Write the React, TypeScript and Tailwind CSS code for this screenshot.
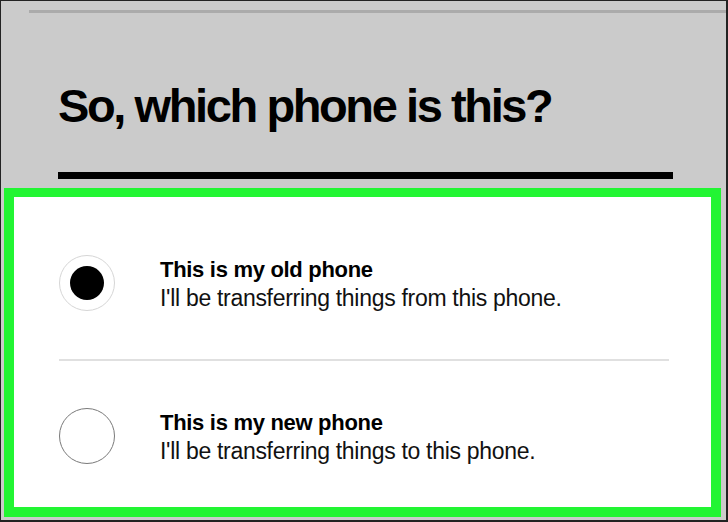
const font = { fontFamily: '"Liberation Sans", Arial, sans-serif' };

interface OptionProps {
  title: string;
  subtitle: string;
  selected?: boolean;
}

function Option({ title, subtitle, selected }: OptionProps) {
  return (
    <div className="flex items-start">
      {selected ? (
        <div className="w-[56px] h-[56px] shrink-0 rounded-full border border-[#d6d6d6] flex items-center justify-center">
          <div className="w-[34px] h-[34px] rounded-full bg-black" />
        </div>
      ) : (
        <div className="w-[56px] h-[56px] shrink-0 rounded-full border border-[#7a7a7a]" />
      )}
      <div className="ml-[45px] mt-[1px] text-black">
        <div className="text-[22px] leading-[28px] font-bold tracking-[-0.3px]">{title}</div>
        <div className="text-[23px] leading-[29px] tracking-[-0.3px] text-[#111]">{subtitle}</div>
      </div>
    </div>
  );
}

export default function App() {
  return (
    <div
      className="w-[728px] h-[522px] bg-[#cbcbcb] border-l border-t border-r-2 border-b-2 border-[#222] overflow-hidden"
      style={font}
    >
      <div className="mt-[9px] ml-[28px] h-[3px] bg-[#ababab]" />
      <h1 className="mt-[69px] ml-[57px] text-[47px] leading-[47px] font-bold tracking-[-2.4px] text-black">
        So, which phone is this?
      </h1>
      <div className="mt-[43px] ml-[57px] w-[615px] h-[7px] bg-black" />
      <div className="mt-[9px] ml-[3px] w-[717px] h-[329px] border-[10px] border-t-[9px] border-[#22f533]">
        <div className="h-full bg-white pl-[45px] pr-[42px] pt-[58px]">
          <Option
            selected
            title="This is my old phone"
            subtitle="I'll be transferring things from this phone."
          />
          <div className="mt-[46px] h-[2px] bg-[#e0e0e0]" />
          <div className="mt-[47px]">
            <Option
              title="This is my new phone"
              subtitle="I'll be transferring things to this phone."
            />
          </div>
        </div>
      </div>
    </div>
  );
}
